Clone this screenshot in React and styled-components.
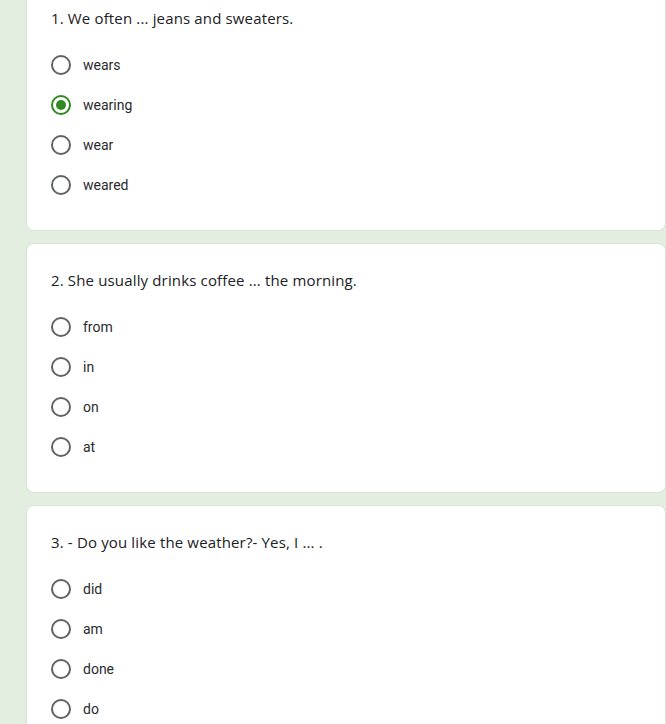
import styled, { createGlobalStyle } from 'styled-components';

const GlobalStyle = createGlobalStyle`
  html, body {
    margin: 0;
    padding: 0;
    background: #e3eee0;
    overflow: hidden;
  }
  body {
    font-family: Roboto, "Liberation Sans", Arial, sans-serif;
  }
`;

const Page = styled.div`
  display: flex;
  flex-direction: column;
  gap: 12px;
  padding-left: 26px;
  margin-top: -19px;
  width: 640px;
`;

const Card = styled.section`
  background: #fff;
  border: 1px solid #d8e2d5;
  border-radius: 8px;
  padding: 24px 24px 12px 24px;
  box-sizing: border-box;
`;

const Question = styled.div`
  font-family: "Open Sans", Roboto, sans-serif;
  font-size: 15px;
  line-height: 24px;
  color: #202124;
  letter-spacing: 0.15px;
  margin-bottom: 15px;
`;

const Options = styled.div`
  display: flex;
  flex-direction: column;
  padding-bottom: 13px;
`;

const Option = styled.label`
  display: flex;
  align-items: center;
  height: 40px;
  gap: 12px;
  font-size: 14px;
  color: #2a2b2e;
  cursor: pointer;
`;

const Radio = styled.span`
  width: 20px;
  height: 20px;
  box-sizing: border-box;
  border-radius: 50%;
  border: 2px solid ${(p) => (p.$checked ? '#2e8a1f' : '#5f6368')};
  display: flex;
  align-items: center;
  justify-content: center;
  flex-shrink: 0;

  &::after {
    content: '';
    width: 10px;
    height: 10px;
    border-radius: 50%;
    background: #2e8a1f;
    display: ${(p) => (p.$checked ? 'block' : 'none')};
  }
`;

const questions = [
  {
    text: '1. We often ... jeans and sweaters.',
    options: ['wears', 'wearing', 'wear', 'weared'],
    checked: 1,
  },
  {
    text: '2. She usually drinks coffee ... the morning.',
    options: ['from', 'in', 'on', 'at'],
  },
  {
    text: '3. - Do you like the weather?- Yes, I ... .',
    options: ['did', 'am', 'done', 'do'],
  },
];

export default function App() {
  return (
    <>
      <GlobalStyle />
      <Page>
        {questions.map((q) => (
          <Card key={q.text}>
            <Question>{q.text}</Question>
            <Options>
              {q.options.map((o, i) => (
                <Option key={o}>
                  <Radio $checked={q.checked === i} />
                  {o}
                </Option>
              ))}
            </Options>
          </Card>
        ))}
      </Page>
    </>
  );
}
